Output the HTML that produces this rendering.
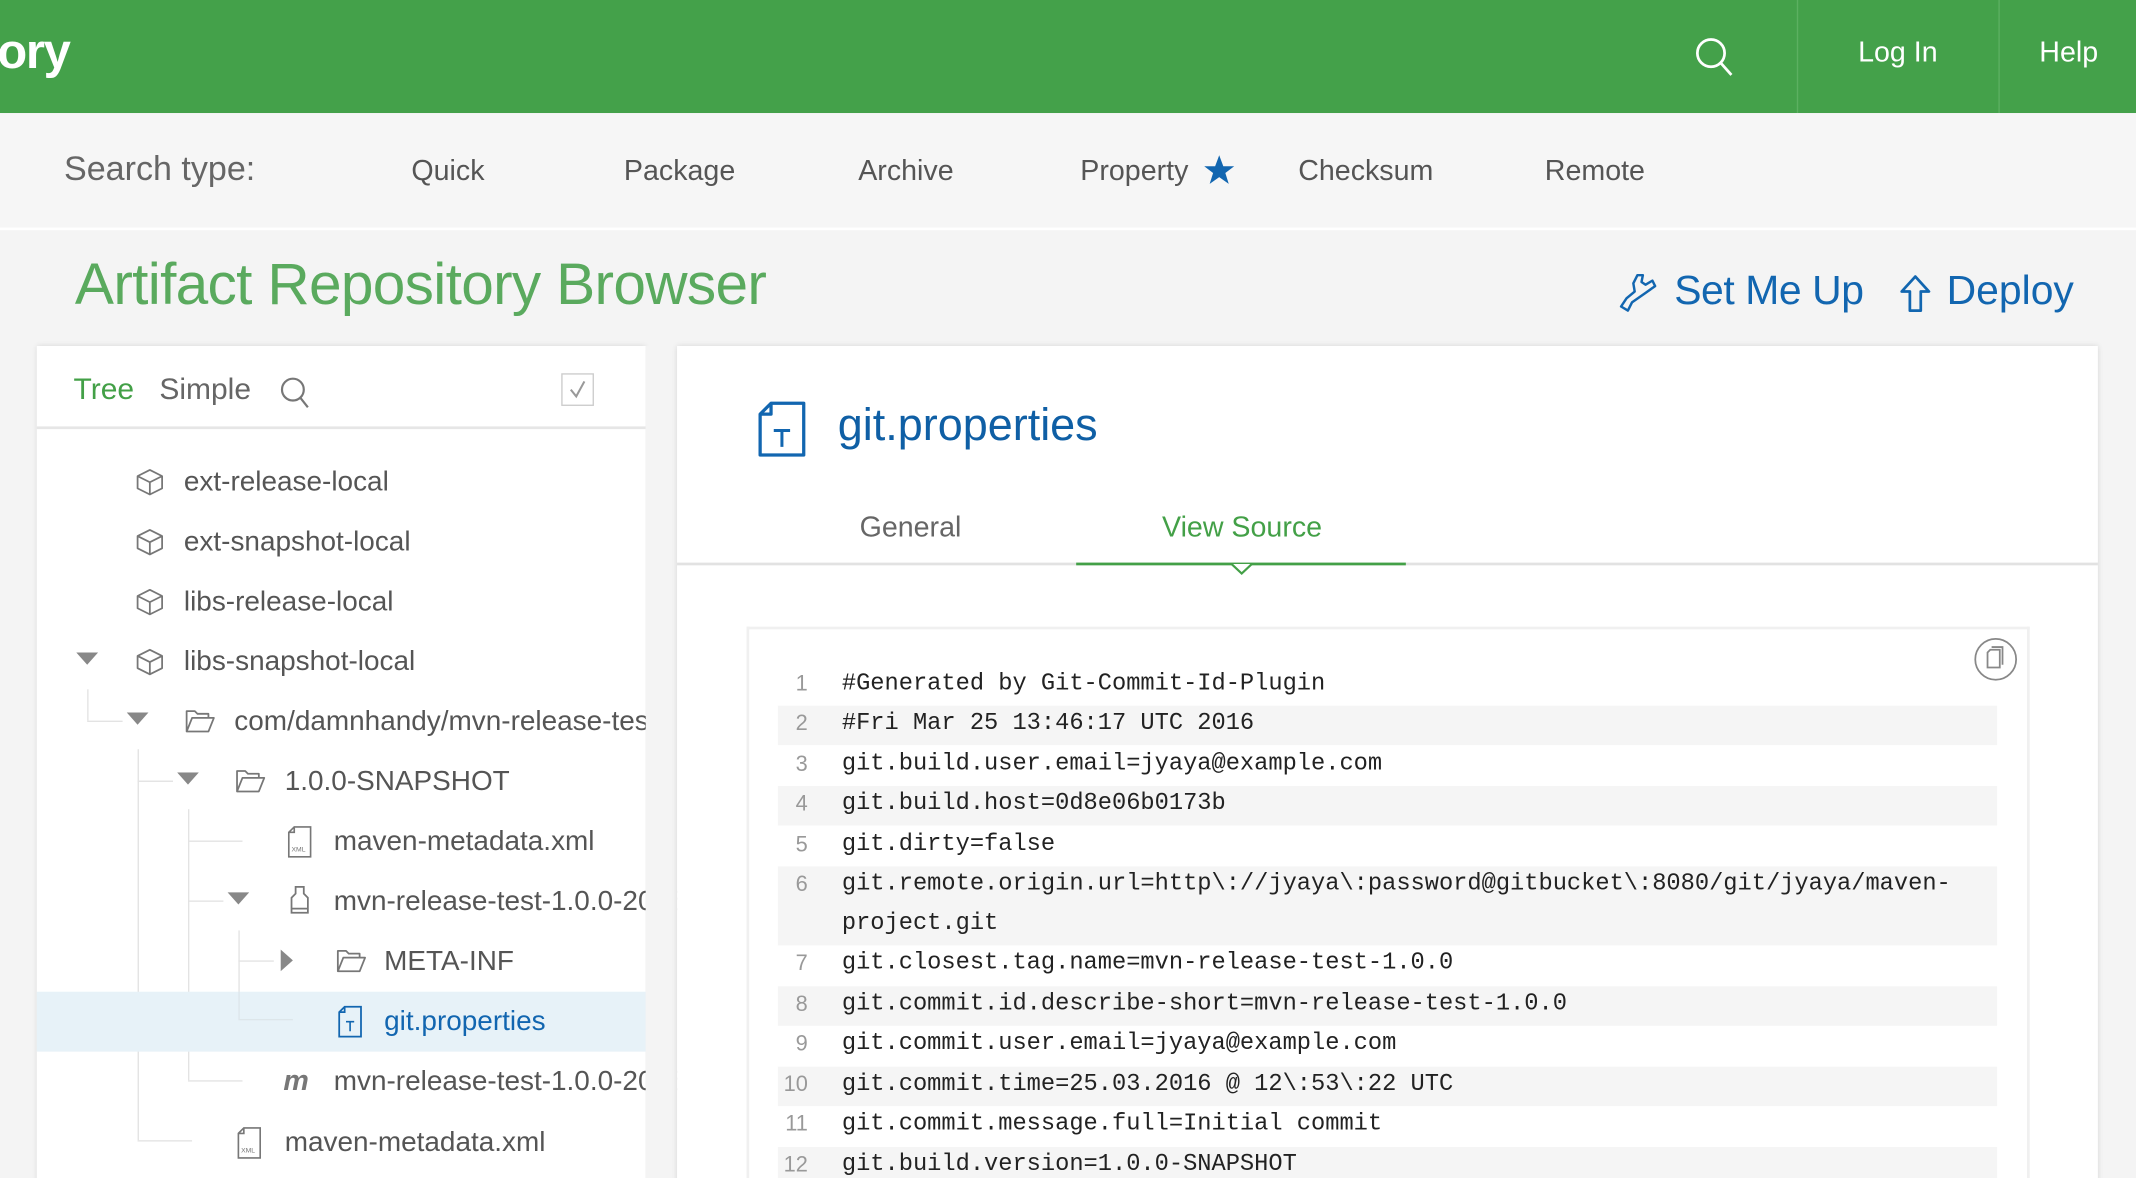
<!DOCTYPE html>
<html><head><meta charset="utf-8"><style>
html,body{margin:0;padding:0;width:2136px;height:1178px;overflow:hidden;background:#f4f4f4}
#w{position:absolute;left:0;top:0;width:1568px;height:865px;transform:scale(1.36225);transform-origin:0 0;font-family:"Liberation Sans",sans-serif;background:#f4f4f4;overflow:hidden}
.a{position:absolute;white-space:nowrap}
.hdr{position:absolute;left:0;top:0;width:1568px;height:83px;background:#44a14a;box-shadow:0 2px 4px rgba(0,0,0,.2)}
.st{position:absolute;left:0;top:83px;width:1568px;height:84px;background:#f6f6f6;border-bottom:2px solid #fff}
.st .a{font-size:21px;color:#555}
.tr{font-size:20.5px;color:#555}
.code{font-family:"Liberation Mono",monospace;font-size:17.4px;color:#222}
.ln{position:absolute;left:571px;width:895px;height:29.4px}
.ln.g{background:#f5f5f5}
.ln span.n{position:absolute;left:0;width:22px;text-align:right;font-family:"Liberation Sans",sans-serif;color:#999;font-size:16px;top:5px}
.ln span.c{position:absolute;left:47px;top:4px}
svg{position:absolute}
</style></head><body><div id="w">
<div class="hdr"></div>
<div class="a" style="left:-2px;top:17px;font-size:36px;font-weight:bold;color:#fff;letter-spacing:-1px">ory</div>
<svg style="left:1244px;top:27px" width="30" height="30" viewBox="0 0 30 30"><circle cx="12" cy="12" r="10" fill="none" stroke="#fff" stroke-width="2"/><path d="M19 19 L27 28" stroke="#fff" stroke-width="2"/></svg>
<div class="a" style="left:1319px;top:0;width:1px;height:83px;background:#5cb061"></div>
<div class="a" style="left:1467px;top:0;width:1px;height:83px;background:#5cb061"></div>
<div class="a" style="left:1364px;top:27px;font-size:21px;color:#fff">Log In</div>
<div class="a" style="left:1497px;top:27px;font-size:21px;color:#fff">Help</div>
<div class="st"><div class="a" style="left:47px;top:27px;font-size:25px;color:#666">Search type:</div><div class="a" style="left:302px;top:31px">Quick</div><div class="a" style="left:458px;top:31px">Package</div><div class="a" style="left:630px;top:31px">Archive</div><div class="a" style="left:793px;top:31px">Property</div><div class="a" style="left:953px;top:31px">Checksum</div><div class="a" style="left:1134px;top:31px">Remote</div></div>
<svg style="left:883px;top:113px" width="24" height="24" viewBox="0 0 24 24"><path d="M12 1 L15 9 L23 9 L16.5 14 L19 22 L12 17 L5 22 L7.5 14 L1 9 L9 9 Z" fill="#1266b0"/></svg>
<div class="a" style="left:55px;top:185px;font-size:43px;color:#5aaa5e;letter-spacing:-.5px">Artifact Repository Browser</div>
<svg style="left:1188px;top:200px" width="30" height="30" viewBox="0 0 30 30"><path d="M14 2 L18 2 L17 7 L20 9 L25 6 L27 10 L20 15 L10 22 L7 28 L2 25 L6 19 L12 14 L11 8 Z" fill="none" stroke="#1266b0" stroke-width="1.8" stroke-linejoin="round"/></svg>
<div class="a" style="left:1229px;top:197px;font-size:30px;color:#1266b0;letter-spacing:-.3px">Set Me Up</div>
<svg style="left:1394px;top:201px" width="24" height="30" viewBox="0 0 24 30"><path d="M12 2 L22 13 L16 13 L16 27 L8 27 L8 13 L2 13 Z" fill="none" stroke="#1266b0" stroke-width="2" stroke-linejoin="round"/></svg>
<div class="a" style="left:1429px;top:197px;font-size:30px;color:#1266b0">Deploy</div>
<div class="a" style="left:27px;top:254px;width:447px;height:640px;background:#fff;box-shadow:0 0 4px rgba(0,0,0,.12)"></div>
<div class="a" style="left:54px;top:273px;font-size:22px;color:#43a047">Tree</div>
<div class="a" style="left:117px;top:273px;font-size:22px;color:#666">Simple</div>
<svg style="left:205px;top:276px" width="24" height="24" viewBox="0 0 24 24"><circle cx="10" cy="10" r="8" fill="none" stroke="#777" stroke-width="1.6"/><path d="M15.5 16 L21 23" stroke="#777" stroke-width="1.6"/></svg>
<div class="a" style="left:412px;top:274px;width:22px;height:22px;border:1.5px solid #ccc"></div>
<svg style="left:414px;top:276px" width="20" height="20" viewBox="0 0 20 20"><path d="M5 10 L9 15 L15 4" fill="none" stroke="#999" stroke-width="1.5"/></svg>
<div class="a" style="left:27px;top:313px;width:447px;height:2px;background:#e6e6e6"></div>
<div class="a" style="left:64px;top:506px;width:1px;height:23px;background:#e3e3e3"></div><div class="a" style="left:64px;top:529px;width:26px;height:1px;background:#e3e3e3"></div>
<div class="a" style="left:101px;top:550px;width:1px;height:287px;background:#e3e3e3"></div><div class="a" style="left:101px;top:573px;width:26px;height:1px;background:#e3e3e3"></div><div class="a" style="left:101px;top:837px;width:40px;height:1px;background:#e3e3e3"></div>
<div class="a" style="left:138px;top:594px;width:1px;height:199px;background:#e3e3e3"></div><div class="a" style="left:138px;top:617px;width:40px;height:1px;background:#e3e3e3"></div><div class="a" style="left:138px;top:661px;width:26px;height:1px;background:#e3e3e3"></div><div class="a" style="left:138px;top:793px;width:40px;height:1px;background:#e3e3e3"></div>
<div class="a" style="left:175px;top:683px;width:1px;height:65px;background:#e3e3e3"></div><div class="a" style="left:175px;top:705px;width:26px;height:1px;background:#e3e3e3"></div>
<div class="a" style="left:27px;top:728px;width:447px;height:44px;background:#e7f2f8"></div>
<div class="a" style="left:175px;top:728px;width:1px;height:20px;background:#dde6ea"></div><div class="a" style="left:175px;top:748px;width:40px;height:1px;background:#dde6ea"></div>
<svg style="left:99px;top:343px" width="22" height="22" viewBox="0 0 22 22"><path d="M11 2 L20 6.5 L20 15.5 L11 20 L2 15.5 L2 6.5 Z M2 6.5 L11 11 L20 6.5 M11 11 L11 20" fill="none" stroke="#777" stroke-width="1.3" stroke-linejoin="round"/></svg>
<svg style="left:99px;top:387px" width="22" height="22" viewBox="0 0 22 22"><path d="M11 2 L20 6.5 L20 15.5 L11 20 L2 15.5 L2 6.5 Z M2 6.5 L11 11 L20 6.5 M11 11 L11 20" fill="none" stroke="#777" stroke-width="1.3" stroke-linejoin="round"/></svg>
<svg style="left:99px;top:431px" width="22" height="22" viewBox="0 0 22 22"><path d="M11 2 L20 6.5 L20 15.5 L11 20 L2 15.5 L2 6.5 Z M2 6.5 L11 11 L20 6.5 M11 11 L11 20" fill="none" stroke="#777" stroke-width="1.3" stroke-linejoin="round"/></svg>
<svg style="left:99px;top:475px" width="22" height="22" viewBox="0 0 22 22"><path d="M11 2 L20 6.5 L20 15.5 L11 20 L2 15.5 L2 6.5 Z M2 6.5 L11 11 L20 6.5 M11 11 L11 20" fill="none" stroke="#777" stroke-width="1.3" stroke-linejoin="round"/></svg>
<svg style="left:56px;top:479px" width="16" height="10"><path d="M0 0 L16 0 L8 9 Z" fill="#888"/></svg>
<svg style="left:93px;top:523px" width="16" height="10"><path d="M0 0 L16 0 L8 9 Z" fill="#888"/></svg>
<svg style="left:130px;top:567px" width="16" height="10"><path d="M0 0 L16 0 L8 9 Z" fill="#888"/></svg>
<svg style="left:167px;top:655px" width="16" height="10"><path d="M0 0 L16 0 L8 9 Z" fill="#888"/></svg>
<svg style="left:206px;top:697px" width="10" height="16"><path d="M0 0 L9 8 L0 16 Z" fill="#888"/></svg>
<svg style="left:135px;top:519px" width="24" height="20" viewBox="0 0 24 20"><path d="M2 18 L2 3 L8 3 L10 5 L18 5 L18 8 M2 18 L6 8 L22 8 L18 18 Z" fill="none" stroke="#777" stroke-width="1.3" stroke-linejoin="round"/></svg>
<svg style="left:172px;top:563px" width="24" height="20" viewBox="0 0 24 20"><path d="M2 18 L2 3 L8 3 L10 5 L18 5 L18 8 M2 18 L6 8 L22 8 L18 18 Z" fill="none" stroke="#777" stroke-width="1.3" stroke-linejoin="round"/></svg>
<svg style="left:246px;top:695px" width="24" height="20" viewBox="0 0 24 20"><path d="M2 18 L2 3 L8 3 L10 5 L18 5 L18 8 M2 18 L6 8 L22 8 L18 18 Z" fill="none" stroke="#777" stroke-width="1.3" stroke-linejoin="round"/></svg>
<svg style="left:210px;top:606px" width="20" height="24" viewBox="0 0 20 24"><path d="M6 1 L18 1 L18 23 L2 23 L2 5 Z M2 5 L6 5 L6 1" fill="none" stroke="#777" stroke-width="1.2"/><text x="4" y="19" font-size="5" fill="#777" font-family="Liberation Sans">XML</text></svg>
<svg style="left:173px;top:827px" width="20" height="24" viewBox="0 0 20 24"><path d="M6 1 L18 1 L18 23 L2 23 L2 5 Z M2 5 L6 5 L6 1" fill="none" stroke="#777" stroke-width="1.2"/><text x="4" y="19" font-size="5" fill="#777" font-family="Liberation Sans">XML</text></svg>
<svg style="left:211px;top:650px" width="18" height="22" viewBox="0 0 18 22"><path d="M6 1 L12 1 L12 6 L15 9 L15 20 L3 20 L3 9 L6 6 Z M3 17 L15 17" fill="none" stroke="#777" stroke-width="1.3"/></svg>
<svg style="left:247px;top:738px" width="20" height="24" viewBox="0 0 20 24"><path d="M6 1 L18 1 L18 23 L2 23 L2 5 Z M2 5 L6 5 L6 1" fill="none" stroke="#1266b0" stroke-width="1.3"/><path d="M7 12 L13 12 M10 12 L10 19" stroke="#1266b0" stroke-width="1.2"/></svg>
<div class="a" style="left:208px;top:782px;font-size:21px;font-weight:bold;font-style:italic;color:#777">m</div>
<div class="a tr" style="left:135px;top:342px">ext-release-local</div>
<div class="a tr" style="left:135px;top:386px">ext-snapshot-local</div>
<div class="a tr" style="left:135px;top:430px">libs-release-local</div>
<div class="a tr" style="left:135px;top:474px">libs-snapshot-local</div>
<div class="a tr" style="left:172px;top:518px">com/damnhandy/mvn-release-test</div>
<div class="a tr" style="left:209px;top:562px">1.0.0-SNAPSHOT</div>
<div class="a tr" style="left:245px;top:606px">maven-metadata.xml</div>
<div class="a tr" style="left:245px;top:650px">mvn-release-test-1.0.0-20160325</div>
<div class="a tr" style="left:282px;top:694px">META-INF</div>
<div class="a tr" style="left:282px;top:738px;color:#1266b0">git.properties</div>
<div class="a tr" style="left:245px;top:782px">mvn-release-test-1.0.0-20160325</div>
<div class="a tr" style="left:209px;top:827px">maven-metadata.xml</div>
<div class="a" style="left:474px;top:254px;width:23px;height:640px;background:#f4f4f4"></div>
<div class="a" style="left:497px;top:254px;width:1043px;height:640px;background:#fff;box-shadow:0 0 4px rgba(0,0,0,.12)"></div>
<svg style="left:555px;top:294px" width="38" height="42" viewBox="0 0 38 42"><path d="M11 2 L35 2 L35 40 L3 40 L3 10 Z M3 10 L11 10 L11 2" fill="none" stroke="#1266b0" stroke-width="2.4" stroke-linejoin="round"/><path d="M13 22 L25 22 M19 22 L19 34" stroke="#1266b0" stroke-width="2.2"/></svg>
<div class="a" style="left:615px;top:293px;font-size:33px;color:#0f5fa5">git.properties</div>
<div class="a" style="left:631px;top:376px;font-size:21px;color:#666">General</div>
<div class="a" style="left:853px;top:376px;font-size:21px;color:#43a047">View Source</div>
<div class="a" style="left:497px;top:413px;width:1043px;height:2px;background:#e2e2e2"></div>
<div class="a" style="left:790px;top:413px;width:242px;height:2px;background:#43a047"></div>
<svg style="left:903px;top:413px" width="17" height="10"><path d="M1 1 L8.5 8 L16 1" fill="#fff" stroke="#43a047" stroke-width="1.6"/></svg>
<div class="a" style="left:548px;top:460px;width:938px;height:420px;border:2px solid #f0f0f0;border-bottom:none"></div>
<svg style="left:1449px;top:468px" width="32" height="32" viewBox="0 0 32 32"><circle cx="16" cy="16" r="15" fill="none" stroke="#888" stroke-width="1.3"/><path d="M12 9 L19 9 L19 22 L10 22 L10 11 Z M13 7 L21 7 L21 20" fill="none" stroke="#888" stroke-width="1.3"/></svg>
<div class="code">
<div class="ln" style="top:489px"><span class="n">1</span><span class="c a">#Generated by Git-Commit-Id-Plugin</span></div>
<div class="ln g" style="top:518px"><span class="n">2</span><span class="c a">#Fri Mar 25 13:46:17 UTC 2016</span></div>
<div class="ln" style="top:548px"><span class="n">3</span><span class="c a">git.build.user.email=jyaya@example.com</span></div>
<div class="ln g" style="top:577px"><span class="n">4</span><span class="c a">git.build.host=0d8e06b0173b</span></div>
<div class="ln" style="top:607px"><span class="n">5</span><span class="c a">git.dirty=false</span></div>
<div class="ln g" style="top:636px;height:58px"><span class="n">6</span><span class="c a">git.remote.origin.url=http\://jyaya\:password@gitbucket\:8080/git/jyaya/maven-</span><span class="c a" style="top:33px">project.git</span></div>
<div class="ln" style="top:694px"><span class="n">7</span><span class="c a">git.closest.tag.name=mvn-release-test-1.0.0</span></div>
<div class="ln g" style="top:724px"><span class="n">8</span><span class="c a">git.commit.id.describe-short=mvn-release-test-1.0.0</span></div>
<div class="ln" style="top:753px"><span class="n">9</span><span class="c a">git.commit.user.email=jyaya@example.com</span></div>
<div class="ln g" style="top:783px"><span class="n">10</span><span class="c a">git.commit.time=25.03.2016 @ 12\:53\:22 UTC</span></div>
<div class="ln" style="top:812px"><span class="n">11</span><span class="c a">git.commit.message.full=Initial commit</span></div>
<div class="ln g" style="top:842px"><span class="n">12</span><span class="c a">git.build.version=1.0.0-SNAPSHOT</span></div>
</div>
</div></body></html>
